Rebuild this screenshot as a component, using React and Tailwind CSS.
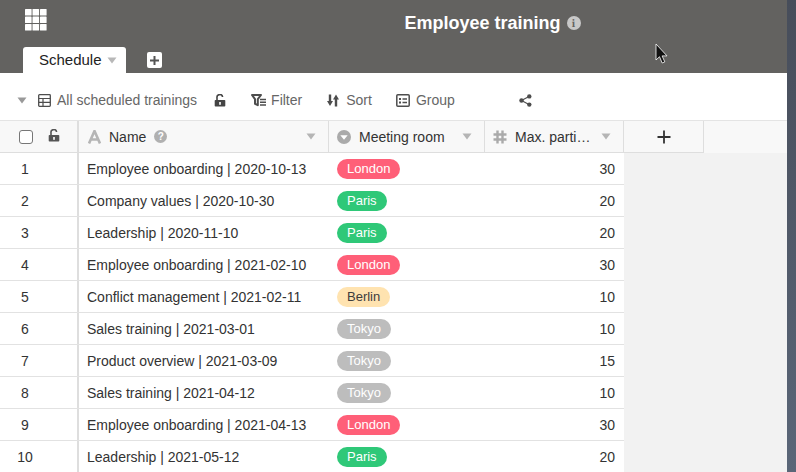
import React from "react";

const rows = [
  ["Employee onboarding | 2020-10-13", "London", 30],
  ["Company values | 2020-10-30", "Paris", 20],
  ["Leadership | 2020-11-10", "Paris", 20],
  ["Employee onboarding | 2021-02-10", "London", 30],
  ["Conflict management | 2021-02-11", "Berlin", 10],
  ["Sales training | 2021-03-01", "Tokyo", 10],
  ["Product overview | 2021-03-09", "Tokyo", 15],
  ["Sales training | 2021-04-12", "Tokyo", 10],
  ["Employee onboarding | 2021-04-13", "London", 30],
  ["Leadership | 2021-05-12", "Paris", 20],
];

const pill = {
  London: "bg-[#ff5f78] text-white",
  Paris: "bg-[#2fc878] text-white",
  Berlin: "bg-[#ffe3b0] text-[#3d3d3d]",
  Tokyo: "bg-[#bdbdbd] text-white",
};

const Caret = ({ className = "" }) => (
  <svg width="10" height="7" viewBox="0 0 10 7" className={className}>
    <path d="M0.5 0.5h9L5 6.5z" fill="currentColor" />
  </svg>
);

const Lock = ({ className = "" }) => (
  <svg width="12" height="13" viewBox="0 0 12 13" className={className}>
    <path d="M3 6V3.800A2.800 2.800 0 0 1 8.600 3" fill="none" stroke="currentColor" strokeWidth="1.600" />
    <path d="M1.500 6h9a.8.8 0 0 1 .8.8v5a.8.8 0 0 1-.8.8h-9a.8.8 0 0 1-.8-.8v-5a.8.8 0 0 1 .8-.8z" fill="currentColor" />
    <rect x="5.200" y="8" width="1.600" height="2.800" fill="#fff" />
  </svg>
);

const AppGrid = () => (
  <svg width="22" height="22" viewBox="0 0 22 22" className="text-white">
    {[0, 7.5, 15].map((y) =>
      [0, 7.5, 15].map((x) => <rect key={`${x}-${y}`} x={x} y={y} width="6.6" height="6.6" rx="0.6" fill="currentColor" />)
    )}
  </svg>
);

const FilterIcon = () => (
  <svg width="15" height="13" viewBox="0 0 15 13" className="text-[#4d4d4d]">
    <path d="M1 1h9L6.800 5.200v6L4 9.800V5.200z" fill="none" stroke="currentColor" strokeWidth="2" strokeLinejoin="round" />
    <path d="M9 5.500h6M9 8.300h6M9 11.100h6" stroke="currentColor" strokeWidth="1.500" />
  </svg>
);

const SortIcon = () => (
  <svg width="12" height="13" viewBox="0 0 12 13" className="text-[#4d4d4d]">
    <path d="M3 0.500v8M9 4v8.500" stroke="currentColor" strokeWidth="2.400" />
    <path d="M0 7h6L3 12zM6 5.500h6L9 0.500z" fill="currentColor" />
  </svg>
);

const GroupIcon = () => (
  <svg width="14" height="13" viewBox="0 0 14 13" className="text-[#4d4d4d]">
    <rect x="0.8" y="0.8" width="12.4" height="11.4" rx="1" fill="none" stroke="currentColor" strokeWidth="1.500" />
    <path d="M3 4h2v2H3zM3 7.500h2v2H3zM6.500 4.300h4.500v1.400H6.500zM6.500 7.800h4.500v1.400H6.500z" fill="currentColor" />
  </svg>
);

const TableIcon = () => (
  <svg width="13" height="13" viewBox="0 0 13 13" className="text-[#4d4d4d]">
    <rect x="0.700" y="0.700" width="11.600" height="11.600" rx="0.800" fill="none" stroke="currentColor" strokeWidth="1.300" />
    <path d="M0.700 4.500h11.600M0.700 8.400h11.600M5 4.500v7.800" stroke="currentColor" strokeWidth="1.200" />
  </svg>
);

const Share = () => (
  <svg width="13" height="13" viewBox="0 0 13 13" className="text-[#4d4d4d]">
    <path d="M2.500 6.500L10 2.500M2.500 6.500L10 10.500" stroke="currentColor" strokeWidth="1.100" />
    <circle cx="2.500" cy="6.500" r="2.200" fill="currentColor" />
    <circle cx="10.300" cy="2.400" r="2.200" fill="currentColor" />
    <circle cx="10.300" cy="10.600" r="2.200" fill="currentColor" />
  </svg>
);

const TextType = () => (
  <svg width="13" height="14" viewBox="0 0 13 14" className="text-[#b5b5b5]">
    <path d="M1 13.500L6.500 1l5.500 12.500M3 9.500h7" fill="none" stroke="currentColor" strokeWidth="2.600" />
  </svg>
);

const SelectType = () => (
  <svg width="14" height="14" viewBox="0 0 14 14">
    <circle cx="7" cy="7" r="7" fill="#aaaaaa" />
    <path d="M3.300 5.300h7.400L7 9.800z" fill="#fff" />
  </svg>
);

const HashType = () => (
  <svg width="14" height="14" viewBox="0 0 14 14" className="text-[#aaaaaa]">
    <path d="M4.500 0.500v13M9.500 0.500v13M0.500 4.500h13M0.500 9.500h13" stroke="currentColor" strokeWidth="2.400" />
  </svg>
);

const Help = () => (
  <span className="flex h-[13px] w-[13px] items-center justify-center rounded-full bg-[#b0b0b0] text-[10px] font-bold leading-none text-white">?</span>
);

export default function App() {
  return (
    <div className="relative flex h-[472px] w-[796px] overflow-hidden bg-gradient-to-b from-[#474d5a] to-[#5a6678] font-['Liberation_Sans',Arial,sans-serif]">
      <div className="flex h-full w-[787px] shrink-0 flex-col bg-[#f2f2f2]">
        <header className="relative flex h-[73px] shrink-0 flex-col bg-[#636260]">
          <div className="flex h-[47px] items-start pl-[25px] pt-[9px]">
            <AppGrid />
            <div className="flex flex-1 items-center justify-center gap-[6px] pl-[163px] pt-[2px] pr-[12px]">
              <span className="text-[18px] leading-[24px] font-bold text-white">Employee training</span>
              <span className="flex h-[14px] w-[14px] items-center justify-center rounded-full bg-[#c8c8c8] font-serif text-[11px] font-bold leading-none text-[#636260]">i</span>
            </div>
          </div>
          <div className="flex h-[26px] items-end pl-[23px]">
            <div className="flex h-[26px] w-[103px] items-center rounded-t-[3px] bg-white pl-[16px] text-[15px] text-[#222]">
              <span>Schedule</span>
              <Caret className="ml-[5px] text-[#b8b8b8]" />
            </div>
            <div className="mb-[5px] ml-[21px] flex h-[16px] w-[15px] items-center justify-center rounded-[2px] bg-white">
              <svg width="11" height="11" viewBox="0 0 11 11"><path d="M5.500 1v9M1 5.500h9" stroke="#555" strokeWidth="2" /></svg>
            </div>
          </div>
        </header>

        <div className="flex h-[48px] shrink-0 items-center border-b border-[#e4e4e4] bg-white pl-[17px] pt-[7px] text-[14px] text-[#666]">
          <Caret className="text-[#999]" />
          <span className="ml-[11px]"><TableIcon /></span>
          <span className="ml-[6px]">All scheduled trainings</span>
          <span className="ml-[17px]"><Lock className="text-[#444]" /></span>
          <span className="ml-[25px]"><FilterIcon /></span>
          <span className="ml-[5px]">Filter</span>
          <span className="ml-[25px]"><SortIcon /></span>
          <span className="ml-[7px]">Sort</span>
          <span className="ml-[24px]"><GroupIcon /></span>
          <span className="ml-[6px]">Group</span>
          <span className="ml-[64px]"><Share /></span>
        </div>

        <div className="flex h-[32px] shrink-0 bg-[#f8f8f8] text-[14px] text-[#333]">
          <div className="flex w-[79px] items-center border-r-2 border-b border-[#dedede] pl-[19px]">
            <span className="h-[14px] w-[14px] rounded-[3px] border border-[#777] bg-white" />
            <Lock className="mb-[2px] ml-[15px] text-[#555]" />
          </div>
          <div className="flex w-[250px] items-center border-r border-b border-[#dedede] pl-[9px] pr-[12px]">
            <TextType />
            <span className="ml-[8px] mt-[2px]">Name</span>
            <span className="ml-[8px]"><Help /></span>
            <Caret className="ml-auto text-[#b5b5b5]" />
          </div>
          <div className="flex w-[156px] items-center border-r border-b border-[#dedede] pl-[8px] pr-[12px]">
            <SelectType />
            <span className="ml-[8px] mt-[2px]">Meeting room</span>
            <Caret className="ml-auto text-[#b5b5b5]" />
          </div>
          <div className="flex w-[139px] items-center border-r border-b border-[#dedede] pl-[8px] pr-[12px]">
            <HashType />
            <span className="ml-[8px] mt-[2px]">Max. parti…</span>
            <Caret className="ml-auto text-[#b5b5b5]" />
          </div>
          <div className="flex w-[80px] items-center justify-center border-r border-b border-[#dedede]">
            <svg width="14" height="14" viewBox="0 0 14 14"><path d="M7 0.500v13M0.500 7h13" stroke="#333" strokeWidth="1.800" /></svg>
          </div>
        </div>

        {rows.map(([name, room, max], i) => (
          <div key={i} className="flex h-[32px] w-[624px] shrink-0 border-b border-[#e2e2e2] bg-white text-[14px] text-[#333]">
            <div className="flex w-[79px] items-center border-r-2 border-[#dedede] pr-[27px] pt-[2px]">
              <span className="w-full text-center">{i + 1}</span>
            </div>
            <div className="flex w-[250px] items-center pl-[8px] pt-[2px]">{name}</div>
            <div className="flex w-[156px] items-center pl-[8px]">
              <span className={`flex h-[20px] items-center rounded-full px-[10px] text-[13px] ${pill[room]}`}>{room}</span>
            </div>
            <div className="flex w-[139px] items-center justify-end pr-[9px] pt-[2px]">{max}</div>
          </div>
        ))}
      </div>

      <svg width="14" height="22" viewBox="0 0 14 22" className="absolute left-[655px] top-[43px]">
        <path d="M1 1v16l3.500-3.300 2.700 6.300 2.600-1.100-2.700-6h4.900z" fill="#111" stroke="#fff" strokeWidth="0.800" />
      </svg>
    </div>
  );
}
